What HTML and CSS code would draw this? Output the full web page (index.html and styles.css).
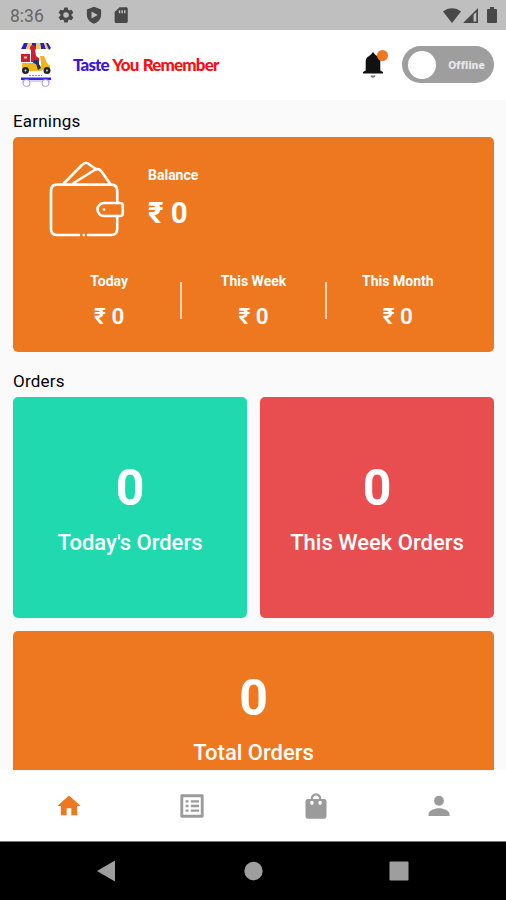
FILE: index.html
```html
<!DOCTYPE html>
<html lang="en">
  <head>
    <meta charset="UTF-8" />
    <meta name="viewport" content="width=device-width, initial-scale=1.0" />
    <title>Taste You Remember</title>
    <link rel="stylesheet" href="styles.css">
  </head>
  <body>
    <div class="status-bar">
      <span class="time">8:36</span>
      <div class="status-left">
        <svg width="18" height="18" viewBox="0 0 24 24"><path fill-rule="evenodd" d="M19.4 13a7.500 7.500 0 0 0 0-2l2.100-1.650a.5.5 0 0 0 .12-.64l-2-3.460a.5.5 0 0 0-.61-.22l-2.490 1a7.300 7.300 0 0 0-1.690-.98l-.38-2.650A.49.49 0 0 0 14 2h-4a.49.49 0 0 0-.49.42l-.38 2.650c-.61.25-1.170.59-1.690.98l-2.490-1a.49.49 0 0 0-.61.22l-2 3.460a.49.49 0 0 0 .12.64L4.570 11a7.900 7.900 0 0 0 0 2l-2.110 1.650a.5.5 0 0 0-.12.64l2 3.460c.12.22.39.3.61.22l2.490-1c.52.4 1.080.73 1.690.98l.38 2.650c.03.24.24.42.49.42h4c.25 0 .46-.18.49-.42l.38-2.650a7.700 7.700 0 0 0 1.690-.98l2.490 1c.23.09.49 0 .61-.22l2-3.460a.5.5 0 0 0-.12-.64zM12 15.700a3.700 3.700 0 1 1 0-7.400 3.700 3.700 0 0 1 0 7.400z"/></svg>
        <svg width="18" height="18" viewBox="0 0 24 24"><path fill-rule="evenodd" d="M12 1L2.500 4.500v7C2.500 17.300 6.500 21.500 12 23.500c5.500-2 9.500-6.200 9.500-12v-7zM8.700 7.200l8.300 4.800-8.300 4.800z"/></svg>
        <svg width="18" height="18" viewBox="0 0 24 24"><path fill-rule="evenodd" d="M19 1.500h-9L3.500 8v12.500c0 1.100.9 2 2 2H19c1.100 0 2-.9 2-2v-17c0-1.100-.9-2-2-2zM9 5.500h2v4H9zm3.500 0h2v4h-2zm3.500 0h2v4h-2z"/></svg>
      </div>
      <div class="status-right">
        <svg width="18" height="15" viewBox="0 0 18 15"><path d="M9 15L0 3.500C5-1 13-1 18 3.500z"/></svg>
        <svg width="15" height="15" viewBox="0 0 15 15"><path fill-rule="evenodd" d="M0 15L15 0v15zM10.500 13.500h2.800V4l-2.800 2.800z"/></svg>
        <svg class="battery" width="10" height="16" viewBox="0 0 10 16"><path d="M3 0h4v2h2q1 0 1 1v12q0 1-1 1H1q-1 0-1-1V3q0-1 1-1h2z"/></svg>
      </div>
    </div>

    <header class="header">
      <svg class="logo" width="30" height="46" viewBox="0 0 30 46">
        <!-- awning -->
        <path fill="#2d21b5" d="M3 1h4L5 7H0zM11 1h4v6h-5zM19 1h4l2 6h-5z"/>
        <path fill="#f2cb62" d="M7 1h4l-1 6H5zM15 1h4l1 6h-5zM23 1h3l3 6h-4z"/>
        <path fill="#2d21b5" d="M25 1h2l3 5-2 2z"/>
        <!-- rider and box -->
        <circle cx="12" cy="6" r="3" fill="#c92036"/>
        <path fill="#d01c34" d="M0 12h9v8H0zM10 8h4l1 6 3 2v4h-8z"/>
        <path fill="#f3b9b9" d="M3 14.500h3v2H3z"/>
        <!-- scooter -->
        <path fill="#f0b51c" d="M1 21h14l2 4 3-5-1-6h4l3 7 3 3v2h-5l-4 3H8l-7-1z"/>
        <path fill="#27306e" d="M13 18h4l3 8-3 2-2-6-3-1z"/>
        <path fill="#fff" d="M18 15l2 4v6l-2-3z"/>
        <circle cx="4.500" cy="28.500" r="3.500" fill="#242424"/>
        <circle cx="26" cy="28.500" r="3.500" fill="#242424"/>
        <circle cx="4.500" cy="28.500" r="1" fill="#ddd"/>
        <circle cx="26" cy="28.500" r="1" fill="#ddd"/>
        <path stroke="#777" stroke-width=".8" stroke-dasharray="2 1" d="M8 33.500h13"/>
        <!-- cart -->
        <path fill="#3926d8" d="M0 35.500h30V38H0z"/>
        <g fill="none" stroke="#a9a2ee">
          <path d="M2 38v3M28 38v3M9 39h12"/>
          <circle cx="5.500" cy="41" r="3.500"/>
          <circle cx="24.500" cy="41" r="3.500"/>
        </g>
      </svg>
      <h1 class="brand"><span>Taste</span> You Remember</h1>
      <div class="bell">
        <svg width="20" height="27" viewBox="0 0 20 27"><path d="M10 0l2 2.500 4 3q1.300 1.200 1.300 3.500v9.500l2.700 1.500v1.500H0V20l2.700-1.500V9q0-2.300 1.300-3.500l4-3z"/><path fill="#777" d="M7.500 23.500h5c-.5 3-4.500 3-5 0z"/></svg>
        <span class="badge"></span>
      </div>
      <div class="toggle">
        <span class="knob"></span>
        <span>Offline</span>
      </div>
    </header>

    <main class="content">
      <h2 class="section-title">Earnings</h2>
      <div class="earnings">
        <div class="balance">
          <svg class="wallet" width="78" height="78" viewBox="0 0 78 78">
            <path d="M31 75H9q-6 0-6-6V30.600q0-6 6-6h54.200q6 0 6 6V43M69.200 56v13q0 6-6 6H40M35.700 75h.1"/>
            <path d="M56 43h16q2.800 0 2.800 2.800v7.400q0 2.800-2.800 2.800H56a6.500 6.500 0 0 1 0-13zM56 49.500h.1"/>
            <path d="M15.700 23.500L34 5q4-4.500 8 0l6 4M25 23.500L46.500 10q4.500-2.500 7 1.500l8.500 12"/>
          </svg>
          <div>
            <div class="label">Balance</div>
            <div class="amount">₹ 0</div>
          </div>
        </div>
        <div class="periods">
          <div class="period">
            <div class="label">Today</div>
            <div class="value">₹ 0</div>
          </div>
          <div class="period">
            <div class="label">This Week</div>
            <div class="value">₹ 0</div>
          </div>
          <div class="period">
            <div class="label">This Month</div>
            <div class="value">₹ 0</div>
          </div>
        </div>
      </div>

      <h2 class="section-title orders-title">Orders</h2>
      <div class="orders">
        <div class="card green">
          <div class="count">0</div>
          <div class="name">Today's Orders</div>
        </div>
        <div class="card red">
          <div class="count">0</div>
          <div class="name">This Week Orders</div>
        </div>
        <div class="card total">
          <div class="count">0</div>
          <div class="name">Total Orders</div>
        </div>
      </div>
    </main>

    <nav class="tabs">
      <a class="active"><svg viewBox="0 0 24 24"><path d="M10 20v-6h4v6h5v-8h3L12 3 2 12h3v8z"/></svg></a>
      <a><svg viewBox="0 0 24 24"><path d="M19.500 4.500v15h-15v-15h15m.6-2.500H3.400c-.8 0-1.400.6-1.400 1.400v17.200c0 .8.600 1.400 1.400 1.400h17.200c.8 0 1.400-.6 1.400-1.400V3.400c0-.8-.6-1.400-1.400-1.400zM11 7h7v2h-7V7zm0 4h7v2h-7v-2zm0 4h7v2h-7zM6.500 7h2.500v2H6.500zm0 4h2.500v2H6.500zm0 4h2.500v2H6.500z"/></svg></a>
      <a><svg viewBox="0 0 24 24"><path fill-rule="evenodd" d="M16.500 6V5.500a4.500 4.500 0 0 0-9 0V6H5a2 2 0 0 0-2 2v13a2 2 0 0 0 2 2h14a2 2 0 0 0 2-2V8a2 2 0 0 0-2-2zM9.500 6v-.5a2.500 2.500 0 0 1 5 0V6zM8.500 7.500a1.500 1.800 0 1 1 0 3.600 1.500 1.800 0 0 1 0-3.600zm7 0a1.500 1.800 0 1 1 0 3.600 1.500 1.800 0 0 1 0-3.600z"/></svg></a>
      <a><svg viewBox="0 0 24 24"><circle cx="12" cy="7.500" r="4.200"/><path d="M3 20.500v-1.500c0-3 5-5 9-5s9 2 9 5v1.500z"/></svg></a>
    </nav>

    <div class="system-nav">
      <svg width="20" height="22" viewBox="0 0 20 22"><path d="M0 11L18 .5v21z"/></svg>
      <svg width="20" height="20" viewBox="0 0 20 20"><circle cx="10.500" cy="10" r="9.200"/></svg>
      <svg width="20" height="20" viewBox="0 0 20 20"><rect x=".5" y=".5" width="19" height="19" rx="1"/></svg>
    </div>
  </body>
</html>
```

FILE: styles.css
```css
* {
  box-sizing: border-box;
}
body {
  font-family: Roboto, "Noto Sans", sans-serif;
  background-color: #fafafa;
  margin: 0;
  height: 900px;
  display: flex;
  flex-direction: column;
  overflow: hidden;
}
h1,
h2 {
  margin: 0;
}
svg {
  display: block;
}

/* Status bar */
.status-bar {
  flex: none;
  height: 30px;
  display: flex;
  align-items: center;
  padding: 0 9px 0 10px;
  background-color: #bfbfbf;
  color: #666;
  fill: #484848;
}
.time {
  width: 47px;
  font-size: 17.500px;
  padding-top: 1px;
}
.status-left {
  display: flex;
  gap: 9.500px;
}
.status-right {
  display: flex;
  align-items: center;
  gap: 2px;
  margin-left: auto;
}
.battery {
  margin-left: 7px;
}

/* Header */
.header {
  flex: none;
  height: 70px;
  display: flex;
  align-items: center;
  padding: 0 12px 0 21px;
  background-color: #fff;
}
.logo {
  margin-bottom: 1px;
}
.brand {
  margin: 0 0 2px 22px;
  font-family: Lato, sans-serif;
  font-weight: 900;
  font-size: 17px;
  letter-spacing: -0.850px;
  word-spacing: 1px;
  color: #fb0d12;
  white-space: nowrap;
}
.brand span {
  color: #3c18d5;
}
.bell {
  position: relative;
  margin-left: auto;
  fill: #111;
}
.badge {
  position: absolute;
  top: -2px;
  right: -5px;
  width: 11px;
  height: 11px;
  border-radius: 50%;
  background-color: #ee7820;
}
.toggle {
  display: flex;
  align-items: center;
  justify-content: space-between;
  width: 92px;
  height: 37px;
  margin: 0 0 1px 19px;
  padding: 0 9px 0 6px;
  border-radius: 19px;
  background-color: #9e9e9e;
  color: #e6e6e6;
  font-size: 11.500px;
  font-weight: 900;
  letter-spacing: 0.200px;
}
.knob {
  width: 28px;
  height: 28px;
  border-radius: 50%;
  background-color: #fff;
}

/* Content */
.content {
  flex: 1;
  min-height: 0;
  overflow: hidden;
  padding: 0 12px 0 13px;
}
.section-title {
  height: 37px;
  padding-top: 10px;
  font-size: 17px;
  line-height: 22px;
  font-weight: 400;
  letter-spacing: 0.200px;
  color: #000;
}
.orders-title {
  height: 45px;
  padding-top: 18px;
}
.earnings {
  height: 215px;
  padding-top: 23px;
  border-radius: 5px;
  background-color: #ee7820;
  color: #fff;
}
.balance {
  display: flex;
  gap: 22px;
  height: 104px;
  padding-left: 35px;
}
.wallet {
  fill: none;
  stroke: #fff;
  stroke-width: 2.600;
  stroke-linecap: round;
  stroke-linejoin: round;
}
.label {
  font-size: 14px;
  line-height: 18px;
  font-weight: 700;
}
.balance .label {
  margin-top: 6px;
}
.amount {
  margin-top: 11px;
  font-size: 29.500px;
  line-height: 36px;
  font-weight: 700;
}
.periods {
  display: grid;
  grid-template-columns: repeat(3, 1fr);
  padding: 0 24px;
  text-align: center;
}
.period {
  position: relative;
  padding-top: 8px;
}
.period + .period::before {
  content: "";
  position: absolute;
  left: -1px;
  top: 18px;
  width: 2px;
  height: 37px;
  background-color: #fbd3b5;
}
.value {
  margin-top: 12px;
  font-size: 22.500px;
  line-height: 28px;
  font-weight: 600;
}

/* Order cards */
.orders {
  display: grid;
  grid-template-columns: 1fr 1fr;
  gap: 13px;
}
.card {
  height: 221px;
  padding-top: 61px;
  border-radius: 5px;
  text-align: center;
  color: #fff;
}
.green {
  background-color: #20d9ae;
}
.red {
  background-color: #e84e50;
}
.total {
  grid-column: span 2;
  padding-top: 37px;
  background-color: #ee7820;
}
.count {
  font-size: 50px;
  line-height: 60px;
  font-weight: 700;
}
.name {
  margin-top: 11px;
  font-size: 22px;
  line-height: 28px;
  font-weight: 500;
}

/* Bottom tabs */
.tabs {
  flex: none;
  height: 72px;
  display: flex;
  padding: 0 5px 0 7px;
  background-color: #fff;
  border-bottom: 1px solid #777;
}
.tabs a {
  flex: 1;
  display: flex;
  align-items: center;
  justify-content: center;
}
.tabs svg {
  width: 28px;
  height: 28px;
  fill: #9b9b9b;
}
.tabs .active svg {
  fill: #ee7820;
}

/* Android navigation */
.system-nav {
  flex: none;
  height: 58px;
  display: flex;
  align-items: center;
  justify-content: space-between;
  padding: 0 97px;
  background-color: #000;
  fill: #9e9e9e;
}
```
